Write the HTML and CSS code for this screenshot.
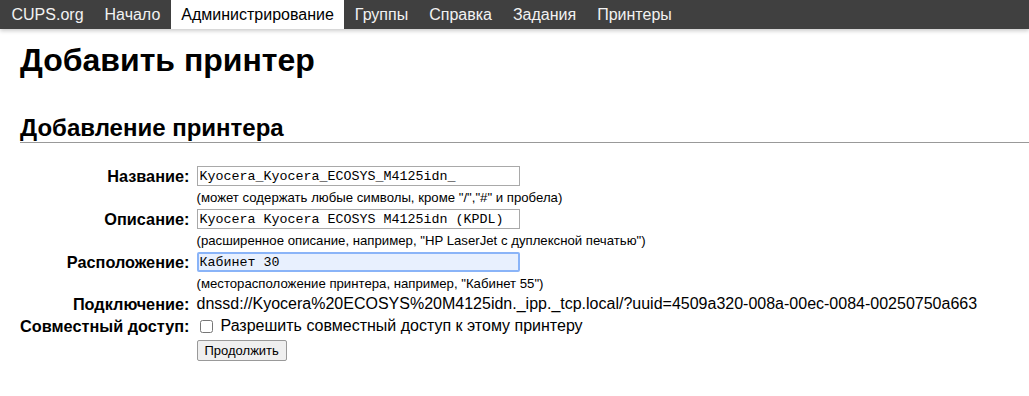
FILE: index.html
```html
<!DOCTYPE html>
<html lang="ru">
<head>
    <meta charset="UTF-8">
    <title>Добавить принтер - CUPS</title>
    <link rel="stylesheet" href="styles.css">
</head>
<body>

<!-- верхнее меню -->
<div class="header">
    <a class="nav-link" href="#">CUPS.org</a>
    <a class="nav-link" href="#">Начало</a>
    <a class="nav-link active" href="#">Администрирование</a>
    <a class="nav-link" href="#">Группы</a>
    <a class="nav-link" href="#">Справка</a>
    <a class="nav-link" href="#">Задания</a>
    <a class="nav-link" href="#">Принтеры</a>
</div>

<div class="body">
    <h1 class="page-title">Добавить принтер</h1>

    <h2 class="section-title">Добавление принтера</h2>

    <form class="add-form">
        <table class="form-table">
            <tr>
                <th class="field-label">Название:</th>
                <td>
                    <input class="text-field" type="text" value="Kyocera_Kyocera_ECOSYS_M4125idn_">
                    <div class="hint">(может содержать любые символы, кроме "/","#" и пробела)</div>
                </td>
            </tr>
            <tr>
                <th class="field-label">Описание:</th>
                <td>
                    <input class="text-field" type="text" value="Kyocera Kyocera ECOSYS M4125idn (KPDL)">
                    <div class="hint">(расширенное описание, например, "HP LaserJet с дуплексной печатью")</div>
                </td>
            </tr>
            <tr>
                <th class="field-label">Расположение:</th>
                <td>
                    <input class="text-field focused" type="text" value="Кабинет 30">
                    <div class="hint">(месторасположение принтера, например, "Кабинет 55")</div>
                </td>
            </tr>
            <tr>
                <th class="field-label line">Подключение:</th>
                <td class="plain">dnssd://Kyocera%20ECOSYS%20M4125idn._ipp._tcp.local/?uuid=4509a320-008a-00ec-0084-00250750a663</td>
            </tr>
            <tr>
                <th class="field-label line">Совместный доступ:</th>
                <td class="plain">
                    <label class="share"><input class="check" type="checkbox">Разрешить совместный доступ к этому принтеру</label>
                </td>
            </tr>
            <tr>
                <th></th>
                <td><button class="submit-btn" type="button">Продолжить</button></td>
            </tr>
        </table>
    </form>
</div>

</body>
</html>
```

FILE: styles.css
```css
body {
    font-family: "Liberation Sans", Arial, sans-serif;
    margin: 0;
    background: #fff;
    color: #000;
}

/* верхнее меню */
.header {
    display: flex;
    height: 29px;
    padding-left: 1px;
    background: #404040;
    box-shadow: 0 2px 4px rgba(0, 0, 0, 0.2);
}

.nav-link {
    display: block;
    padding: 0 10.5px;
    line-height: 29px;
    font-size: 16px;
    color: #f2f2f2;
    text-decoration: none;
}

.nav-link.active {
    background: #fff;
    color: #000;
}

/* содержимое */
.body {
    padding: 0 0 0 20px;
}

.page-title {
    font-size: 32px;
    margin: 12px 0 0;
    line-height: 38px;
}

.section-title {
    font-size: 24px;
    margin: 35px 0 0;
    line-height: 28px;
    border-bottom: 1px solid #999;
}

.add-form {
    margin-top: 23px;
}

.form-table {
    border-collapse: collapse;
}

.form-table th,
.form-table td {
    padding: 0 0 4px;
    vertical-align: top;
}

.field-label {
    text-align: right;
    font-size: 16.3px;
    font-weight: bold;
    line-height: 20px;
    white-space: nowrap;
    padding-right: 7px !important;
}

.field-label.line {
    line-height: 18px;
}

.text-field {
    display: block;
    width: 323px;
    height: 20px;
    box-sizing: border-box;
    margin: 0;
    padding: 0 2px;
    border: 1px solid #a9a9a9;
    font-family: "Liberation Mono", "DejaVu Sans Mono", monospace;
    font-size: 13.33px;
    color: #000;
}

.text-field.focused {
    background: #e8f0fe;
    border: 2px solid #8ab4f8;
    border-radius: 2px;
    padding: 0 1px;
    outline: none;
}

.hint {
    font-size: 13.2px;
    line-height: 15px;
    margin-top: 4px;
}

.plain {
    font-size: 16px;
    line-height: 18px;
    white-space: nowrap;
}

.share {
    display: flex;
    align-items: center;
}

.check {
    margin: 0 8px 0 3px;
    width: 13px;
    height: 13px;
}

.submit-btn {
    display: block;
    margin-top: 1px;
    height: 21px;
    font-family: "Liberation Sans", Arial, sans-serif;
    font-size: 13px;
    padding: 0 7px;
    border: 1px solid #999;
    border-radius: 2px;
    background: #efefef;
    color: #000;
}
```
